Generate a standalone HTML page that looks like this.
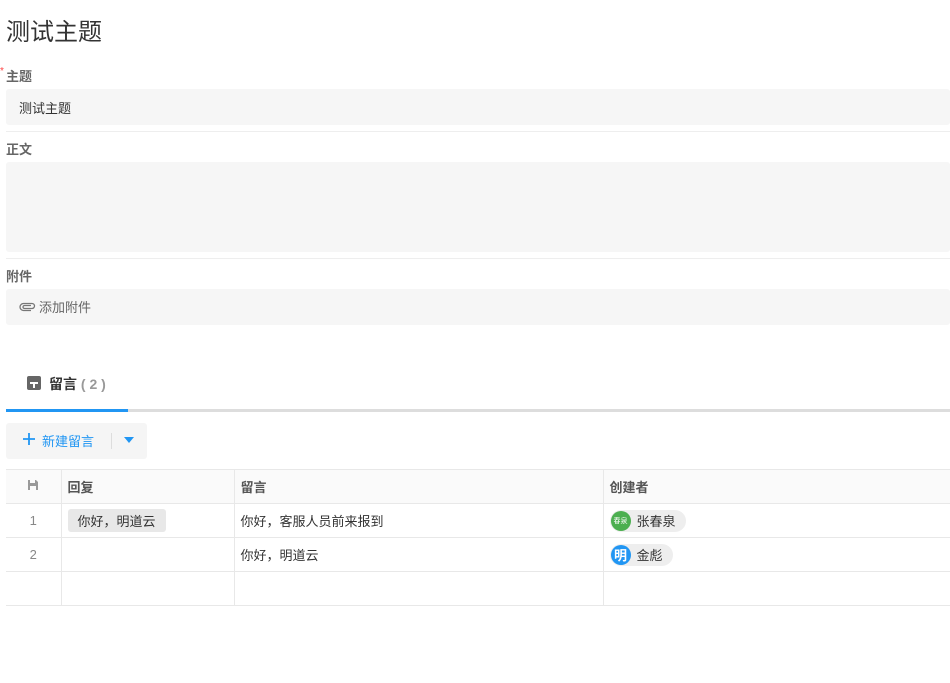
<!DOCTYPE html>
<html><head><meta charset="utf-8"><style>
*{margin:0;padding:0;box-sizing:border-box}
body{width:950px;height:683px;background:#fff;font-family:"Liberation Sans","Noto Sans CJK SC",sans-serif;color:#333;position:relative;overflow:hidden}
.a{position:absolute}
.lbl{font-size:13px;font-weight:bold;color:#666;left:6px}
.box{left:6px;width:944px;background:#f6f6f6;border-radius:3px}
.hr{left:6px;width:944px;height:1px;background:#eee}
table{position:absolute;left:6px;top:469px;width:944px;border-collapse:collapse;font-size:13px;table-layout:fixed}
td{border:1px solid #e8e8e8;height:34px;padding:0 6px;color:#333}
tr:first-child td{background:#fafafa;color:#555;font-weight:bold;height:34px}
td:first-child{border-left:none;text-align:center;color:#888}
td:last-child{border-right:none}
.tag{display:inline-block;background:#e8e8e8;border-radius:3px;padding:2px 10px;color:#333}
.u{display:inline-flex;align-items:center;background:#eee;border-radius:11px;padding:1px 10px 1px 1px;gap:6px;font-size:13px}
.av{width:20px;height:20px;border-radius:50%;color:#fff;display:inline-flex;align-items:center;justify-content:center}
</style></head><body>
<div class="a" style="left:6px;top:12px;font-size:24px;color:#333">测试主题</div>
<div class="a" style="left:0;top:66px;color:#f44;font-size:10px">*</div>
<div class="a lbl" style="top:66px">主题</div>
<div class="a box" style="top:89px;height:36px;padding:9px 13px;font-size:13px;color:#333">测试主题</div>
<div class="a hr" style="top:131px"></div>
<div class="a lbl" style="top:139px">正文</div>
<div class="a box" style="top:162px;height:90px"></div>
<div class="a hr" style="top:258px"></div>
<div class="a lbl" style="top:266px">附件</div>
<div class="a box" style="top:289px;height:36px;padding:8px 13px;font-size:13px;color:#666">
<svg width="17" height="10" viewBox="0 0 17 10" style="vertical-align:0;margin-right:3px"><path d="M12 3.5H5.5a1.5 1.5 0 0 0 0 3H13a2.5 2.5 0 0 0 0-5H4.5a3.5 3.5 0 0 0 0 7H12" fill="none" stroke="#777" stroke-width="1.3"/></svg>添加附件</div>
<div class="a" style="left:27px;top:376px;width:14px;height:14px;background:#666;border-radius:2px"><div class="a" style="left:3px;top:6px;width:8px;height:1.5px;background:#fff"></div><div class="a" style="left:6px;top:6px;width:1.5px;height:6px;background:#fff"></div></div>
<div class="a" style="left:49px;top:374px;font-size:14px;font-weight:bold;color:#333">留言<span style="color:#999;font-weight:bold"> ( 2 )</span></div>
<div class="a" style="left:6px;top:409px;width:944px;height:3px;background:#ddd"></div>
<div class="a" style="left:6px;top:409px;width:122px;height:3px;background:#2196f3"></div>
<div class="a" style="left:6px;top:423px;width:141px;height:36px;background:#f5f5f5;border-radius:3px"></div>
<svg class="a" style="left:23px;top:433px" width="12" height="12" viewBox="0 0 12 12"><path d="M6 0v12M0 6h12" stroke="#2196f3" stroke-width="1.8"/></svg>
<div class="a" style="left:42px;top:431px;font-size:13px;color:#2196f3">新建留言</div>
<div class="a" style="left:111px;top:433px;width:1px;height:16px;background:#ddd"></div>
<div class="a" style="left:124px;top:437px;width:0;height:0;border-left:5px solid transparent;border-right:5px solid transparent;border-top:6px solid #2196f3"></div>
<table>
<colgroup><col style="width:55px"><col style="width:173px"><col style="width:369px"><col></colgroup>
<tr><td><svg width="12" height="12" viewBox="0 0 12 12"><path d="M1 1h8l2 2v8H1z" fill="#999"/><rect x="3" y="1" width="5" height="3" fill="#fafafa"/><rect x="3" y="7" width="6" height="4" fill="#fafafa"/></svg></td><td>回复</td><td>留言</td><td>创建者</td></tr>
<tr><td>1</td><td><span class="tag">你好，明道云</span></td><td>你好，客服人员前来报到</td><td><span class="u"><span class="av" style="background:#4caf50;font-size:7px">春泉</span>张春泉</span></td></tr>
<tr><td>2</td><td></td><td>你好，明道云</td><td><span class="u"><span class="av" style="background:#2196f3;font-size:13px;font-weight:bold">明</span>金彪</span></td></tr>
<tr><td></td><td></td><td></td><td></td></tr>
</table>
</body></html>
